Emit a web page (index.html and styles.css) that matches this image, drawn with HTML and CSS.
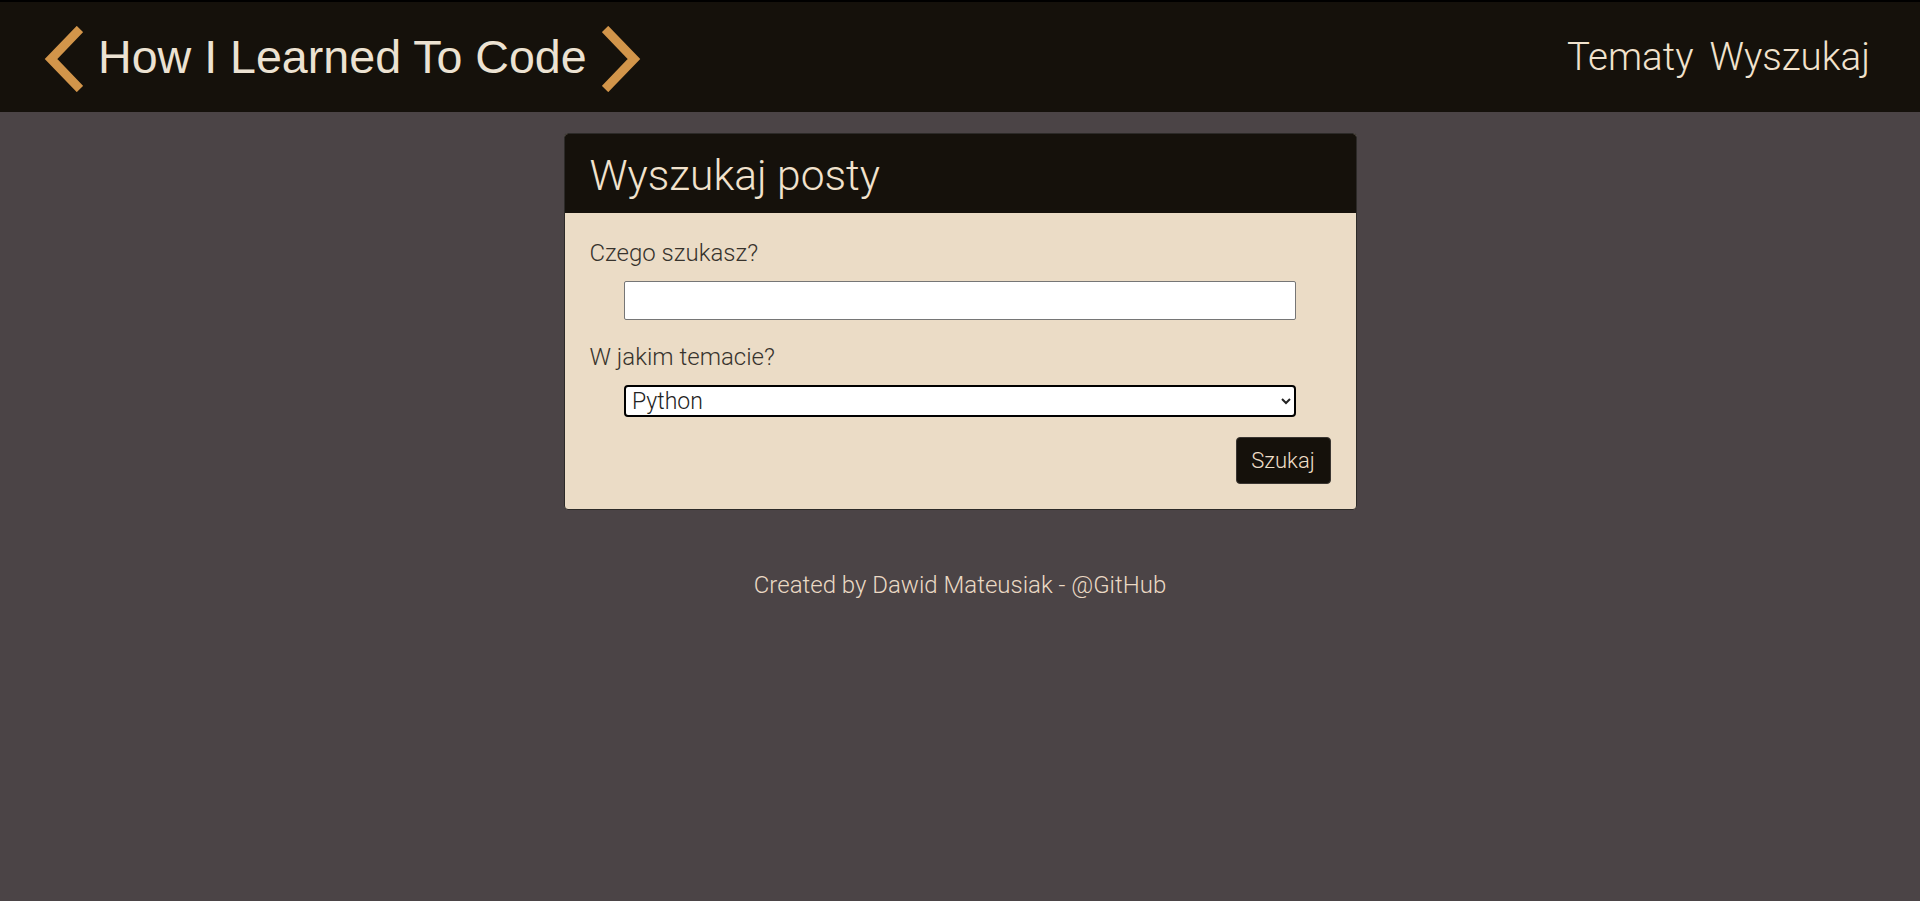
FILE: index.html
```html
<!DOCTYPE html>
<html lang="pl">
<head>
<meta charset="utf-8">
<title>How I Learned To Code</title>
<link rel="stylesheet" href="styles.css">
</head>
<body>
<header class="topbar">
  <a class="logo" href="#">
    <svg class="chev" viewBox="0 0 40 66" width="40" height="66"><polyline points="37,3 8,33 37,63" fill="none" stroke="#d2954a" stroke-width="9" stroke-linejoin="miter"/></svg>
    <span class="logo-text">How I Learned To Code</span>
    <svg class="chev" viewBox="0 0 40 66" width="40" height="66"><polyline points="3,3 32,33 3,63" fill="none" stroke="#d2954a" stroke-width="9" stroke-linejoin="miter"/></svg>
  </a>
  <nav class="nav">
    <a href="#" class="nav-link">Tematy</a>
    <a href="#" class="nav-link">Wyszukaj</a>
  </nav>
</header>
<main class="main">
  <section class="card">
    <div class="card-head"><h1 class="card-title">Wyszukaj posty</h1></div>
    <form class="card-body">
      <label class="field-label" for="q">Czego szukasz?</label>
      <input class="field-input" id="q" type="text">
      <label class="field-label second" for="t">W jakim temacie?</label>
      <select class="field-select" id="t"><option>Python</option></select>
      <div class="actions"><button class="btn" type="button">Szukaj</button></div>
    </form>
  </section>
  <footer class="footer">Created by Dawid Mateusiak - <a href="#" class="footer-link">@GitHub</a></footer>
</main>
</body>
</html>
```
FILE: styles.css
```css
html, body { margin: 0; padding: 0; }
body {
  background: #4b4446;
  font-family: "Liberation Sans", Arial, sans-serif;
  color: #ecdfcb;
  min-height: 901px;
}
a { color: inherit; text-decoration: none; }
.topbar {
  height: 110px;
  border-top: 2px solid #000;
  background: #15110b;
  display: flex;
  align-items: center;
  justify-content: space-between;
  padding: 0 50px 0 43px;
}
.logo {
  display: flex;
  align-items: center;
  gap: 15px;
  margin-top: 4px;
}
.chev { display: block; }
.logo-text {
  font-size: 46.6px;
  line-height: 1;
  color: #ece2d2;
  margin-top: -4px;
}
.nav { display: flex; gap: 16px; margin-top: -2px; }
.nav-link {
  font-family: Roboto, "Liberation Sans", sans-serif;
  font-weight: 300;
  font-size: 38.5px;
  color: #f1e2cd;
}
.main { display: flex; flex-direction: column; align-items: center; }
.card {
  width: 793px;
  margin-top: 21px;
  border-radius: 4px;
  overflow: hidden;
  background: #ebdcc6;
  box-sizing: border-box;
  border: 1px solid #2c2a28;
}
.card-head {
  height: 79px;
  background: #15110b;
  display: flex;
  align-items: center;
  padding: 0 25px;
}
.card-title {
  margin: 0;
  font-family: Roboto, "Liberation Sans", sans-serif;
  font-weight: 300;
  font-size: 42.5px;
  color: #f1e2cd;
  margin-top: 3px;
}
.card-body {
  display: flex;
  flex-direction: column;
  padding: 27px 25px 25px;
}
.field-label {
  font-family: Roboto, "Liberation Sans", sans-serif;
  font-weight: 300;
  font-size: 24px;
  line-height: 26px;
  color: #37332d;
}
.field-label.second { margin-top: 24px; }
.field-input {
  align-self: center;
  width: 672px;
  height: 39px;
  box-sizing: border-box;
  margin-top: 15px;
  border: 1px solid #767676;
  border-radius: 2px;
  background: #fff;
  font-size: 18px;
}
.field-select {
  align-self: center;
  width: 672px;
  height: 32px;
  box-sizing: border-box;
  margin-top: 15px;
  border: 2px solid #000;
  border-radius: 4px;
  background: #fff;
  font-family: Roboto, "Liberation Sans", sans-serif;
  font-weight: 300;
  font-size: 23px;
  color: #222;
  padding: 0 2px;
}
.actions { display: flex; justify-content: flex-end; margin-top: 20px; }
.btn {
  width: 95px;
  height: 47px;
  background: #15110b;
  border: 1px solid #3a3632;
  border-radius: 4px;
  color: #eedfc8;
  font-family: Roboto, "Liberation Sans", sans-serif;
  font-weight: 300;
  font-size: 22px;
  padding: 0;
}
.footer {
  margin-top: 62px;
  font-family: Roboto, "Liberation Sans", sans-serif;
  font-weight: 300;
  font-size: 24px;
  line-height: 26px;
  color: #ead9c4;
}
```
